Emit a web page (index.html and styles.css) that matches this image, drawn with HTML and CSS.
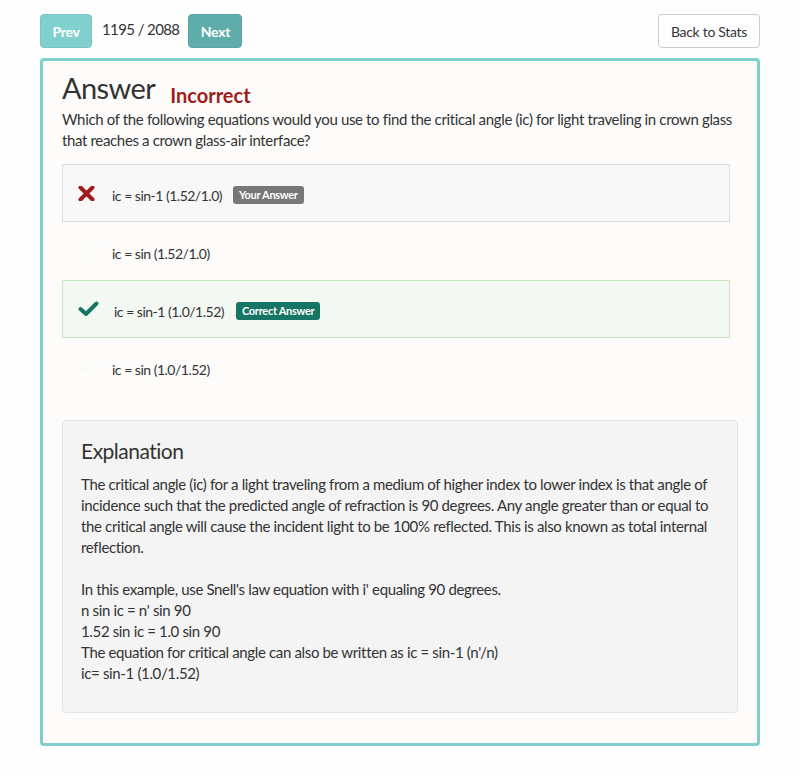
FILE: index.html
```html
<!DOCTYPE html>
<html>
<head>
<meta charset="utf-8">
<link rel="stylesheet" href="styles.css">
</head>
<body>
<div class="page">
  <div class="toolbar">
    <div class="nav">
      <button class="btn btn-prev">Prev</button>
      <span class="counter">1195 / 2088</span>
      <button class="btn btn-next">Next</button>
    </div>
    <button class="btn btn-back">Back to Stats</button>
  </div>
  <div class="card">
    <div class="title-row">
      <h1 class="title">Answer</h1>
      <span class="status">Incorrect</span>
    </div>
    <p class="question">Which of the following equations would you use to find the critical angle (ic) for light traveling in crown glass that reaches a crown glass-air interface?</p>
    <div class="options">
      <div class="option option-wrong">
        <span class="icon"><svg width="17" height="15" viewBox="0 0 17 15"><path d="M2.5 1.5 L14.5 13.5 M14.5 1.5 L2.5 13.5" stroke="#a01c1c" stroke-width="4" stroke-linecap="round"/></svg></span>
        <span class="opt-text">ic = sin-1 (1.52/1.0)</span>
        <span class="badge badge-gray">Your Answer</span>
      </div>
      <div class="option">
        <span class="icon"><svg width="21" height="16" viewBox="0 0 21 16"><path d="M2.5 8 L8 13 L18.5 2.5" fill="none" stroke="#fafaf8" stroke-width="4" stroke-linecap="round" stroke-linejoin="round"/></svg></span>
        <span class="opt-text">ic = sin (1.52/1.0)</span>
      </div>
      <div class="option option-right">
        <span class="icon"><svg width="21" height="16" viewBox="0 0 21 16"><path d="M2.5 8 L8 13 L18.5 2.5" fill="none" stroke="#167565" stroke-width="4" stroke-linecap="round" stroke-linejoin="round"/></svg></span>
        <span class="opt-text">ic = sin-1 (1.0/1.52)</span>
        <span class="badge badge-green">Correct Answer</span>
      </div>
      <div class="option">
        <span class="icon"><svg width="21" height="16" viewBox="0 0 21 16"><path d="M2.5 8 L8 13 L18.5 2.5" fill="none" stroke="#fafaf8" stroke-width="4" stroke-linecap="round" stroke-linejoin="round"/></svg></span>
        <span class="opt-text">ic = sin (1.0/1.52)</span>
      </div>
    </div>
    <div class="explanation">
      <h2 class="exp-title">Explanation</h2>
      <p class="exp-text">The critical angle (ic) for a light traveling from a medium of higher index to lower index is that angle of incidence such that the predicted angle of refraction is 90 degrees. Any angle greater than or equal to the critical angle will cause the incident light to be 100% reflected. This is also known as total internal reflection.</p>
      <p class="exp-text exp-gap">In this example, use Snell's law equation with i' equaling 90 degrees.<br>n sin ic = n' sin 90<br>1.52 sin ic = 1.0 sin 90<br>The equation for critical angle can also be written as ic = sin-1 (n'/n)<br>ic= sin-1 (1.0/1.52)</p>
    </div>
  </div>
</div>
</body>
</html>
```

FILE: styles.css
```css
html, body {
  margin: 0;
  padding: 0;
  background: #fefefe;
}
body {
  font-family: Lato, "Open Sans", sans-serif;
  color: #333;
}
.page {
  padding: 14px 40px 0 40px;
  width: 720px;
}
.toolbar {
  display: flex;
  justify-content: space-between;
  align-items: center;
  height: 34px;
  margin-bottom: 10px;
}
.nav {
  display: flex;
  align-items: center;
}
.btn {
  font-family: Lato, sans-serif;
  font-size: 14px;
  height: 34px;
  border-radius: 4px;
  border: 1px solid transparent;
  padding: 0;
  cursor: pointer;
}
.btn-prev {
  width: 52px;
  background: #80d0ce;
  border-color: #76c6c4;
  color: #fff;
  font-weight: bold;
  letter-spacing: -0.3px;
}
.btn-next {
  width: 54px;
  background: #5fadab;
  border-color: #58a5a3;
  color: #fff;
  font-weight: bold;
  letter-spacing: -0.3px;
}
.counter {
  font-size: 15px;
  letter-spacing: -0.6px;
  word-spacing: 0px;
  color: #333;
  margin: 0 9px 0 10px;
  position: relative;
  top: -2px;
}
.btn-back {
  width: 102px;
  background: #fff;
  border-color: #ccc;
  color: #333;
  font-size: 14px;
  letter-spacing: -0.3px;
}
.card {
  border: 3px solid #7ecfcd;
  border-radius: 4px;
  background: #fdfcfb;
  padding: 8px 19px 30px 19px;
}
.title-row {
  display: flex;
  align-items: baseline;
}
.title {
  margin: 0;
  font-size: 29px;
  font-weight: normal;
  letter-spacing: -0.6px;
  line-height: 38px;
  color: #333;
}
.status {
  margin-left: 15px;
  font-size: 20px;
  font-weight: bold;
  color: #a01c1c;
  position: relative;
  top: 4px;
}
.question {
  margin: 2px 0 13px 0;
  font-size: 15px;
  letter-spacing: -0.35px;
  line-height: 21px;
}
.options {
  margin-right: 8px;
}
.option {
  display: flex;
  align-items: center;
  height: 58px;
  box-sizing: border-box;
  border: 1px solid transparent;
  padding-left: 15px;
  padding-top: 4px;
  font-size: 14px;
  letter-spacing: -0.5px;
}
.option-wrong {
  background: #f8f8f8;
  border-color: #ddd;
}
.option-right {
  background: #f3f9f2;
  border-color: #c9e6c3;
}
.icon {
  width: 34px;
  display: flex;
  align-items: center;
  margin-top: -4px;
}
.option-right .icon {
  width: 36px;
}
.badge {
  margin-left: 11px;
  font-size: 11px;
  font-weight: bold;
  letter-spacing: -0.3px;
  color: #fff;
  height: 18px;
  line-height: 18px;
  padding: 0 6px;
  border-radius: 3px;
}
.badge-gray {
  background: #777;
}
.badge-green {
  background: #167565;
  margin-left: 12px;
}
.explanation {
  margin-top: 24px;
  background: #f4f4f4;
  border: 1px solid #e3e3e3;
  border-radius: 4px;
  padding: 15px 18px 28px 18px;
}
.exp-title {
  margin: 0 0 8px 0;
  font-size: 21px;
  font-weight: normal;
  letter-spacing: -0.5px;
  line-height: 30px;
  color: #333;
}
.exp-text {
  margin: 0;
  font-size: 15px;
  letter-spacing: -0.35px;
  line-height: 21px;
}
.exp-gap {
  margin-top: 21px;
}
```
